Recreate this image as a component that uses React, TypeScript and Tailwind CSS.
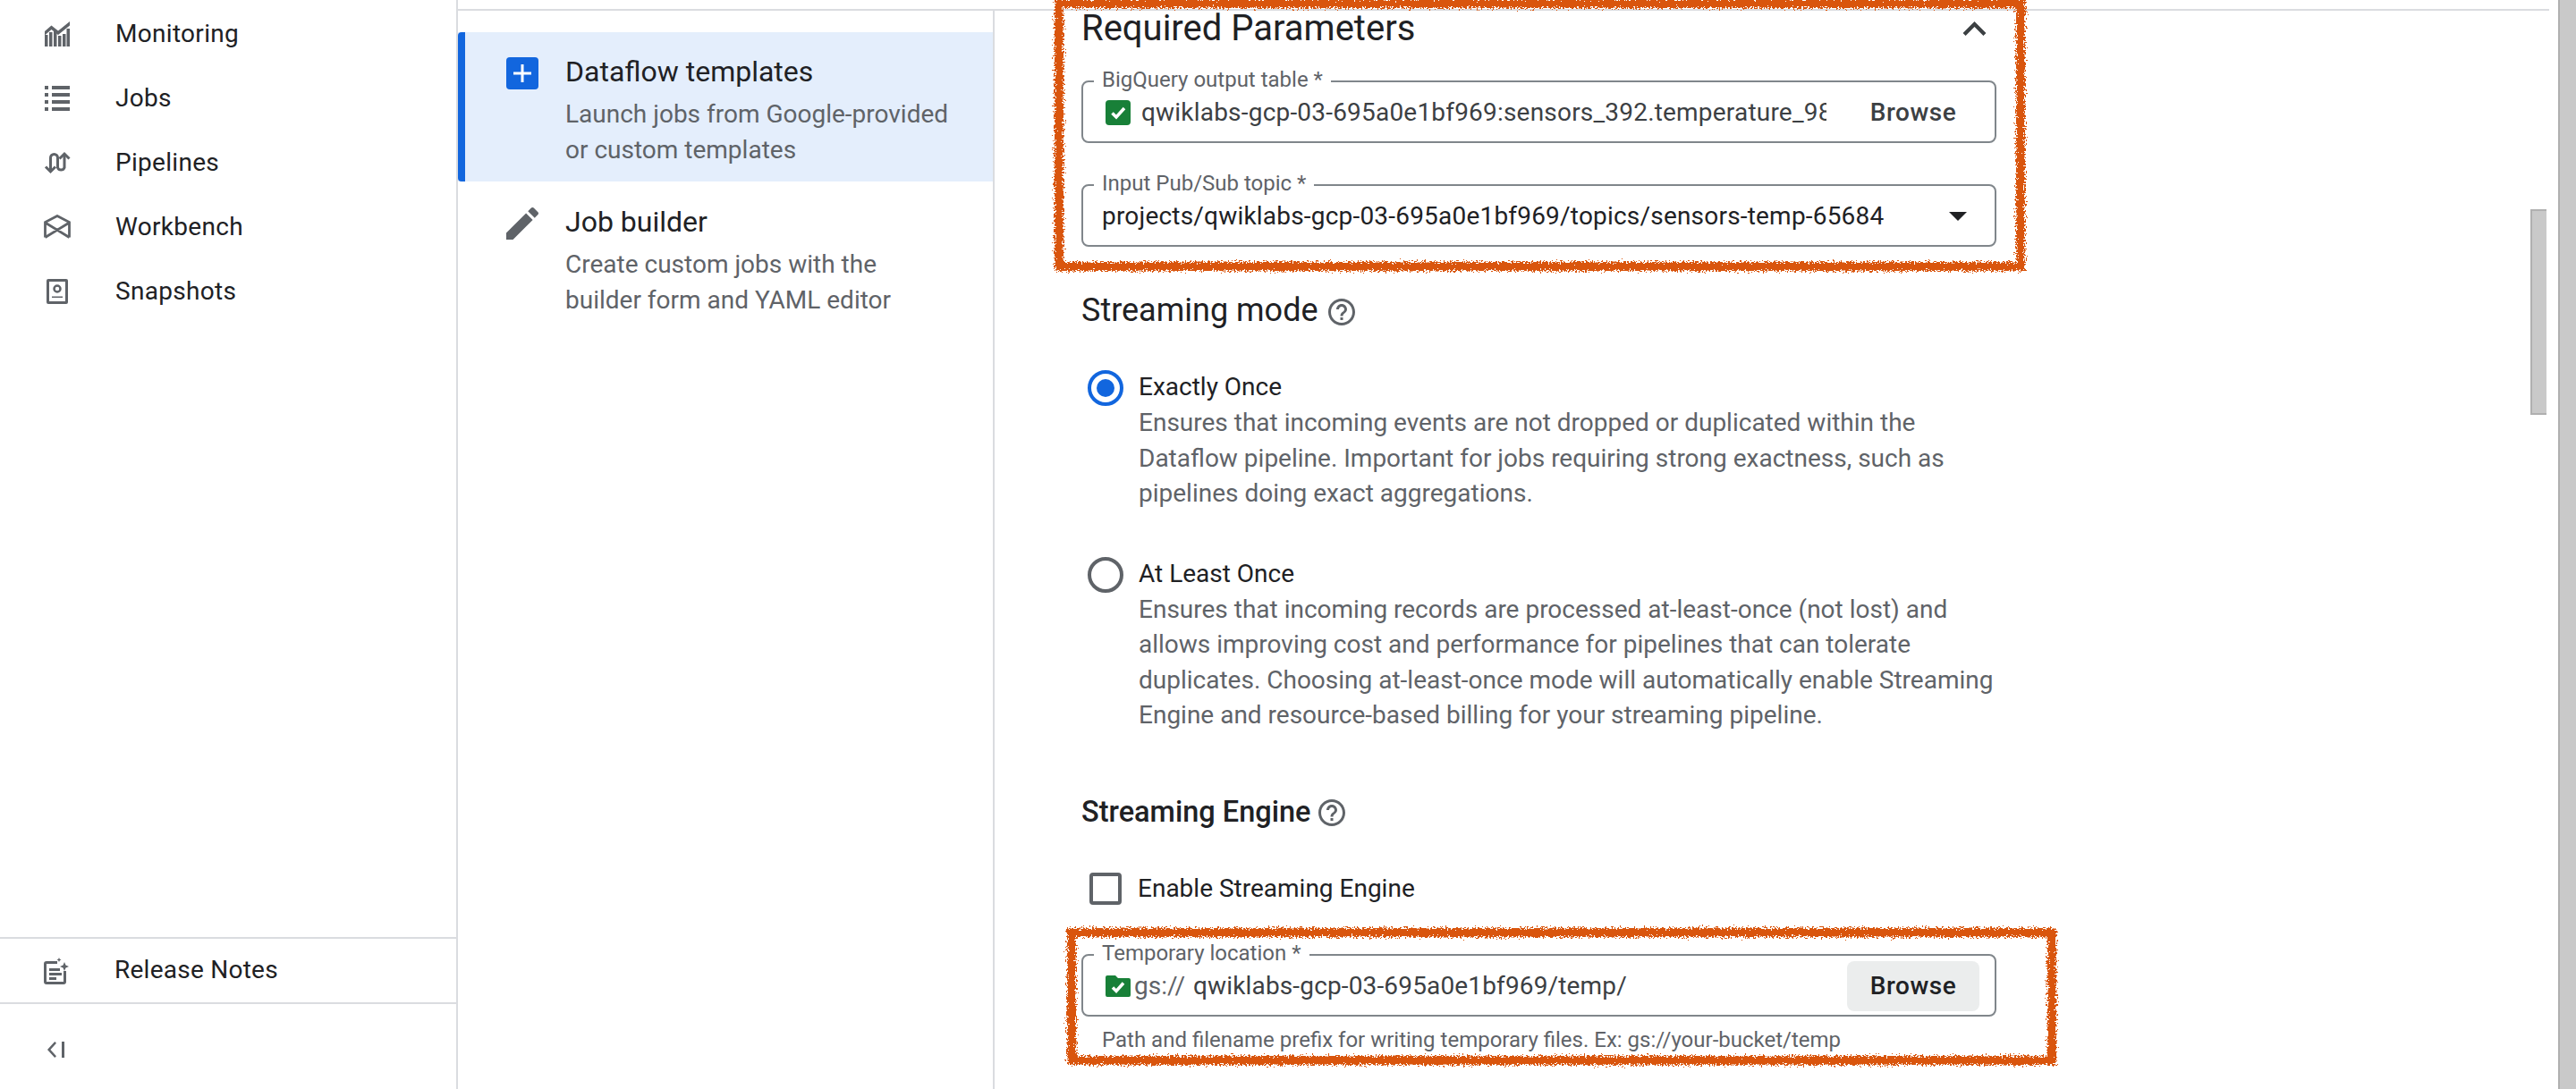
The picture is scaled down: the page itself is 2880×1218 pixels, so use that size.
import type { ReactNode } from 'react';

const NAV = [
  { label: 'Monitoring', icon: <MonitoringIcon /> },
  { label: 'Jobs', icon: <JobsIcon /> },
  { label: 'Pipelines', icon: <PipelinesIcon /> },
  { label: 'Workbench', icon: <WorkbenchIcon /> },
  { label: 'Snapshots', icon: <SnapshotsIcon /> },
];

function MonitoringIcon() {
  return (
    <svg viewBox="0 0 28 28" className="h-7 w-7" fill="#5f6368">
      <path d="M0 15h3.500v13H0zM5 12h3.500v16H5zM10 11h3.500v17H10zM15 16h3.500v12H15zM20 14h3.500v14H20zM24.500 8H28v20h-3.500z" />
      <path d="M0 11 7.500 4.500l7.500 6L28 0v4.500L15 15 7.500 9 0 15.500z" />
    </svg>
  );
}

function JobsIcon() {
  return (
    <svg viewBox="0 0 28 28" className="h-7 w-7" fill="#5f6368">
      <path d="M0 0h4v4H0zM8 0h20v4H8zM0 8h4v4H0zM8 8h20v4H8zM0 16h4v4H0zM8 16h20v4H8zM0 24h4v4H0zM8 24h20v4H8z" />
    </svg>
  );
}

function PipelinesIcon() {
  return (
    <svg viewBox="0 0 30 26" className="h-[26px] w-[30px]" fill="none" stroke="#5f6368" strokeWidth="3">
      <path d="M7.500 23V7.500a4 4 0 0 1 8 0v11a4 4 0 0 0 7.500 0V3" />
      <path d="M2 17.500 7.500 23l5.500-5.500M17.500 8.500 23 3l5.500 5.500" />
    </svg>
  );
}

function WorkbenchIcon() {
  return (
    <svg viewBox="0 0 30 28" className="h-7 w-[30px]" fill="none" stroke="#5f6368" strokeWidth="2.800">
      <path d="M1.500 25.500V8.500L15 1.500l13.500 7v17M1.500 9 28.500 25.500M28.500 9 1.500 25.500" />
    </svg>
  );
}

function SnapshotsIcon() {
  return (
    <svg viewBox="0 0 24 28" className="h-7 w-6">
      <rect x="0" y="0" width="24" height="28" rx="2" fill="#5f6368" />
      <rect x="3" y="3" width="18" height="22" fill="#fff" />
      <circle cx="12" cy="11" r="3.500" fill="none" stroke="#5f6368" strokeWidth="2.500" />
      <path d="M6 19.500h12v1.500H6z" fill="#5f6368" />
    </svg>
  );
}

function ReleaseNotesIcon() {
  return (
    <svg viewBox="0 0 28 30" className="h-[30px] w-7" fill="#5f6368">
      <path d="M15 4H3a3 3 0 0 0-3 3v20a3 3 0 0 0 3 3h19a3 3 0 0 0 3-3V15h-3v12H3V7h12z" />
      <path d="M6 12h12v3H6zM6 17h14v3H6zM6 22h8v3H6z" />
      <path d="m23 5 1.500 3.500L28 10l-3.500 1.500L23 15l-1.500-3.500L18 10l3.500-1.500zM17 0l.8 1.700 1.700.8-1.700.8L17 5l-.8-1.700-1.700-.8 1.700-.8z" />
    </svg>
  );
}

function CollapseIcon() {
  return (
    <svg viewBox="0 0 20 18" className="h-[18px] w-5" fill="#5f6368">
      <path d="M10 1.800 3.400 9l6.600 7.200-1.800 1.800L0 9 8.200 0zM16 0H19v18H16z" />
    </svg>
  );
}

function HelpIcon() {
  return (
    <svg viewBox="2 2 20 20" className="h-[30px] w-[30px]" fill="#5f6368">
      <path d="M11 18h2v-2h-2v2zm1-16C6.480 2 2 6.480 2 12s4.480 10 10 10 10-4.480 10-10S17.520 2 12 2zm0 18c-4.410 0-8-3.590-8-8s3.590-8 8-8 8 3.590 8 8-3.590 8-8 8zm0-14c-2.210 0-4 1.790-4 4h2c0-1.100.9-2 2-2s2 .9 2 2c0 2-3 1.750-3 5h2c0-2.250 3-2.500 3-5 0-2.210-1.790-4-4-4z" />
    </svg>
  );
}

function CheckTile() {
  return (
    <svg viewBox="0 0 28 28" className="h-7 w-7 shrink-0">
      <rect width="28" height="28" rx="4" fill="#188038" />
      <path d="m7.500 14.500 4.500 4.500 9-10" fill="none" stroke="#fff" strokeWidth="3.500" />
    </svg>
  );
}

function CheckFolder() {
  return (
    <svg viewBox="0 0 28 24" className="h-[26px] w-7 shrink-0">
      <path d="M2 0h9l3 3h12a2 2 0 0 1 2 2v17a2 2 0 0 1-2 2H2a2 2 0 0 1-2-2V2a2 2 0 0 1 2-2z" fill="#188038" />
      <path d="m8 13.500 4 4 8-9" fill="none" stroke="#fff" strokeWidth="3.500" />
    </svg>
  );
}

function Field({ label, children }: { label: string; children: ReactNode }) {
  return (
    <div className="relative flex h-[70px] w-[1023px] items-center rounded-lg border-2 border-[#80868b] pt-[2px]">
      <span className="absolute -top-[15px] left-[12px] bg-white px-[9px] text-[24px] leading-[24px] text-[#5f6368]">
        {label}
      </span>
      {children}
    </div>
  );
}

function BrowseButton({ filled }: { filled?: boolean }) {
  return (
    <button
      className={`flex h-14 w-[148px] shrink-0 items-center justify-center rounded-lg text-[28px] font-medium tracking-[0.5px] ${
        filled ? 'bg-[#ebeded] text-[#202124]' : 'text-[#3c4043]'
      }`}
    >
      Browse
    </button>
  );
}

function RadioOption({
  checked,
  title,
  lines,
}: {
  checked?: boolean;
  title: string;
  lines: string[];
}) {
  return (
    <div className="flex pl-[7px]">
      <div
        className={`mt-px flex h-10 w-10 shrink-0 items-center justify-center rounded-full border-[4px] ${
          checked ? 'border-[#1266de]' : 'border-[#5f6368]'
        }`}
      >
        {checked && <div className="h-5 w-5 rounded-full bg-[#1266de]" />}
      </div>
      <div className="ml-[17px]">
        <div className="text-[28px] leading-10 text-[#202124]">{title}</div>
        {lines.map((line) => (
          <div key={line} className="whitespace-nowrap text-[28px] leading-[39.5px] text-[#5f6368]">
            {line}
          </div>
        ))}
      </div>
    </div>
  );
}

function Annotations() {
  return (
    <svg className="pointer-events-none absolute left-0 top-0 h-[1218px] w-[2880px]" viewBox="0 0 2880 1218" fill="none">
      <defs>
        <filter id="rough" x="0" y="0" width="2880" height="1218" filterUnits="userSpaceOnUse">
          <feTurbulence type="fractalNoise" baseFrequency="0.55" numOctaves="3" seed="4" />
          <feDisplacementMap in="SourceGraphic" scale="11" />
        </filter>
      </defs>
      <g filter="url(#rough)" stroke="#d9540a" strokeWidth="10">
        <path d="M1184 4H2259V298H1184Z" />
        <path d="M1198 1043H2294V1186H1198Z" />
      </g>
    </svg>
  );
}

export default function App() {
  return (
    <div className="relative flex h-[1218px] w-[2880px] overflow-hidden bg-white font-['Roboto',sans-serif]">
      {/* Left nav */}
      <aside className="flex w-[512px] shrink-0 flex-col border-r-2 border-[#dadce0]">
        <nav className="pt-[2px]">
          {NAV.map((item) => (
            <div key={item.label} className="flex h-[72px] items-center">
              <div className="flex w-[128px] shrink-0 justify-center">{item.icon}</div>
              <span className="ml-px text-[28px] tracking-[0.3px] text-[#202124]">{item.label}</span>
            </div>
          ))}
        </nav>
        <div className="mt-auto flex h-[75px] items-center border-y-2 border-[#dadce0]">
          <div className="flex w-[126px] shrink-0 justify-center">
            <ReleaseNotesIcon />
          </div>
          <span className="ml-[2px] pb-[2px] text-[28px] tracking-[0.25px] text-[#202124]">Release Notes</span>
        </div>
        <div className="flex h-[95px] items-center pl-[53px] pt-[6px]">
          <CollapseIcon />
        </div>
      </aside>

      <div className="flex flex-1 flex-col pr-[10px]">
        <div className="h-3 shrink-0 border-b-2 border-[#dadce0]" />
        <div className="flex flex-1">
          {/* Create-job type picker */}
          <div className="w-[600px] shrink-0 border-r-2 border-[#dadce0] pt-6">
            <div className="relative h-[167px] bg-[#e4eefc] pl-[54px] pt-6">
              <div className="absolute left-0 top-0 h-full w-2 rounded-l bg-[#1266de]" />
              <div className="flex">
                <div className="mt-[4px] flex h-9 w-9 shrink-0 items-center justify-center rounded bg-[#1266de]">
                  <svg viewBox="0 0 20 20" className="h-5 w-5" fill="#fff">
                    <path d="M8.500 0h3v8.500H20v3h-8.500V20h-3v-8.500H0v-3h8.500z" />
                  </svg>
                </div>
                <div className="ml-[30px]">
                  <div className="text-[32px] leading-10 text-[#202124]">Dataflow templates</div>
                  <div className="mt-[8px] text-[28px] leading-10 text-[#5f6368]">
                    Launch jobs from Google-provided
                    <br />
                    or custom templates
                  </div>
                </div>
              </div>
            </div>
            <div className="flex pl-[54px] pt-[25px]">
              <svg viewBox="3 3 18 18" className="mt-[4px] h-9 w-9 shrink-0" fill="#5f6368">
                <path d="M3 17.250V21h3.750L17.810 9.940l-3.750-3.750zM20.710 7.040c.39-.39.39-1.020 0-1.410l-2.340-2.340c-.39-.39-1.020-.39-1.410 0l-1.830 1.830 3.750 3.750z" />
              </svg>
              <div className="ml-[30px]">
                <div className="text-[32px] leading-10 text-[#202124]">Job builder</div>
                <div className="mt-[8px] text-[28px] leading-10 text-[#5f6368]">
                  Create custom jobs with the
                  <br />
                  builder form and YAML editor
                </div>
              </div>
            </div>
          </div>

          {/* Form */}
          <div className="relative flex-1 pl-[97px]">
            <div className="flex w-[1022px] items-center justify-between">
              <h2 className="text-[40px] font-normal leading-10 text-[#202124]">Required Parameters</h2>
              <svg viewBox="6 8 12 7.410" className="mr-[10px] h-4 w-[27px]" fill="#3c4043">
                <path d="M12 8l-6 6 1.410 1.410L12 10.830l4.590 4.580L18 14z" />
              </svg>
            </div>

            <div className="mt-[38px]">
              <Field label="BigQuery output table *">
                <div className="ml-[25px] flex min-w-0 flex-1 items-center">
                  <CheckTile />
                  <div className="ml-3 w-[766px] overflow-hidden whitespace-nowrap text-[28px] tracking-[0.2px] text-[#3c4043]">
                    qwiklabs-gcp-03-695a0e1bf969:sensors_392.temperature_98765
                  </div>
                </div>
                <div className="mr-[17px]">
                  <BrowseButton />
                </div>
              </Field>
            </div>

            <div className="mt-[46px]">
              <Field label="Input Pub/Sub topic *">
                <div className="ml-[21px] flex-1 whitespace-nowrap text-[28px] tracking-[0.2px] text-[#202124]">
                  projects/qwiklabs-gcp-03-695a0e1bf969/topics/sensors-temp-65684
                </div>
                <svg viewBox="0 0 20 10" className="mr-[31px] h-[10px] w-5" fill="#202124">
                  <path d="M0 0h20L10 10z" />
                </svg>
              </Field>
            </div>

            <div className="mt-[49px] flex h-11 items-center">
              <h3 className="text-[36px] font-normal text-[#202124]">Streaming mode</h3>
              <div className="ml-[11px] mt-[3px]">
                <HelpIcon />
              </div>
            </div>

            <div className="mt-[44px]">
              <RadioOption
                checked
                title="Exactly Once"
                lines={[
                  'Ensures that incoming events are not dropped or duplicated within the',
                  'Dataflow pipeline. Important for jobs requiring strong exactness, such as',
                  'pipelines doing exact aggregations.',
                ]}
              />
            </div>
            <div className="mt-[50px]">
              <RadioOption
                title="At Least Once"
                lines={[
                  'Ensures that incoming records are processed at-least-once (not lost) and',
                  'allows improving cost and performance for pipelines that can tolerate',
                  'duplicates. Choosing at-least-once mode will automatically enable Streaming',
                  'Engine and resource-based billing for your streaming pipeline.',
                ]}
              />
            </div>

            <div className="mt-[67px] flex h-11 items-center">
              <h3 className="text-[32.5px] font-medium text-[#202124]">Streaming Engine</h3>
              <div className="ml-[9px]">
                <HelpIcon />
              </div>
            </div>

            <div className="mt-[43px] flex h-10 items-center pl-[9px]">
              <div className="h-9 w-9 shrink-0 rounded border-[4px] border-[#5f6368]" />
              <span className="ml-[18px] text-[28px] text-[#202124]">Enable Streaming Engine</span>
            </div>

            <div className="mt-[53px]">
              <Field label="Temporary location *">
                <div className="ml-[25px] flex min-w-0 flex-1 items-center">
                  <CheckFolder />
                  <span className="ml-[4px] text-[28px] text-[#5f6368]">gs://</span>
                  <span className="ml-[9px] text-[28px] tracking-[0.15px] text-[#3c4043]">qwiklabs-gcp-03-695a0e1bf969/temp/</span>
                </div>
                <div className="mr-[17px]">
                  <BrowseButton filled />
                </div>
              </Field>
            </div>
            <div className="ml-[23px] mt-[12px] text-[24px] leading-7 text-[#5f6368]">
              Path and filename prefix for writing temporary files. Ex: gs://your-bucket/temp
            </div>

            {/* Inner scrollbar thumb */}
            <div className="absolute right-[3px] top-[222px] h-[230px] w-[18px] border-y-2 border-l-2 border-[#b0b0b0] bg-[#c9c9c9]" />
          </div>
        </div>
      </div>

      {/* Page scrollbar */}
      <div className="w-5 shrink-0 border-l-2 border-[#b0b0b0] bg-[#c9c9c9]" />

      <Annotations />
    </div>
  );
}
